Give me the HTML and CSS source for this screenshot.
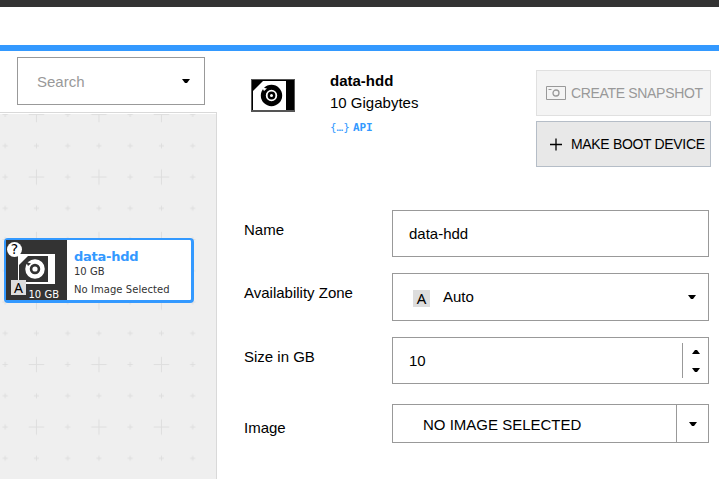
FILE: index.html
```html
<!DOCTYPE html>
<html lang="en">
<head>
<meta charset="utf-8">
<title>data-hdd</title>
<link rel="stylesheet" href="styles.css">
</head>
<body>
<svg class="defs" width="0" height="0" aria-hidden="true">
  <symbol id="down" viewBox="0 0 8 4"><path d="M0 0h8L5 4H3z"/></symbol>
  <symbol id="up" viewBox="0 0 8 4"><path d="M0 4h8L5 0H3z"/></symbol>
</svg>
<header class="topbar"></header>
<div class="layout">
  <aside class="sidebar">
    <div class="search"><span>Search</span><svg class="caret"><use href="#down"/></svg></div>
    <div class="canvas">
      <svg class="grid" width="215" height="365">
        <defs>
          <pattern id="marks" x="5.2" y="-30.7" width="62.5" height="62.5" patternUnits="userSpaceOnUse">
            <g fill="none" stroke="#dedede">
              <path d="M23.5 31.25h15.5M31.25 23.5v15.5"/>
              <path d="M28.6 0h5.2M31.25 0v2.6M31.25 59.9v2.6M0 28.6v5.2M0 31.25h2.6M59.9 31.25h2.6M0 0h2.6M0 0v2.6M59.9 0h2.6M0 59.9v2.6M62.5 28.6v5.2M28.6 62.5h5.2M62.5 59.9v2.6M59.9 62.5h2.6M62.5 0v2.6M0 62.5h2.6"/>
            </g>
          </pattern>
        </defs>
        <rect width="215" height="365" fill="url(#marks)"/>
      </svg>
      <div class="card">
        <div class="thumb">
          <svg width="60" height="60">
            <path fill="#fff" d="M12 14h37v30H12z"/>
            <path fill="#333" d="M22 16h20v26H13V25z"/>
            <circle cx="29" cy="29" r="7.500" fill="none" stroke="#fff" stroke-width="4.500"/>
            <circle cx="29" cy="29" r="2.600" fill="#fff"/>
            <path d="M20 22l5 1.500-3 2.500z" fill="#333"/>
          </svg>
          <span class="unknown">?</span>
          <span class="zone">A</span>
          <span class="size">10 GB</span>
        </div>
        <div class="info">
          <strong>data-hdd</strong>
          <span>10 GB</span>
          <span class="image">No Image Selected</span>
        </div>
      </div>
    </div>
  </aside>
  <main class="detail">
    <div class="summary">
      <svg class="disk" width="44" height="33">
        <path fill="#555" d="M0 0h44v33H0z"/>
        <path fill="#000" d="M1 1h42v30H1z"/>
        <path fill="#fff" d="M12 2h23v29H2V12z"/>
        <circle cx="20.500" cy="16.500" r="8.200" fill="none" stroke="#000" stroke-width="5"/>
        <circle cx="20.500" cy="16.500" r="2.700" fill="none" stroke="#000" stroke-width="2.400"/>
        <path fill="#fff" d="M11 8.500l5 1-3 2.500z"/>
      </svg>
      <div class="title">
        <strong>data-hdd</strong>
        <span>10 Gigabytes</span>
        <a class="api"><span>{…}</span><b>API</b></a>
      </div>
      <div class="actions">
        <div class="button disabled">
          <svg width="20" height="14" fill="none" stroke="#999"><path d="M.5.5h19v13H.5zM2.500 3.500h3"/><circle cx="10" cy="7" r="3" stroke-width="1.300"/></svg>
          <span>CREATE SNAPSHOT</span>
        </div>
        <div class="button">
          <svg width="20" height="14" fill="none" stroke="#000" stroke-width="1.300"><path d="M4 7.500h12M10 1.500v12"/></svg>
          <span>MAKE BOOT DEVICE</span>
        </div>
      </div>
    </div>
    <div class="form">
      <label>Name</label>
      <div class="field">data-hdd</div>
      <label>Availability Zone</label>
      <div class="field select"><span class="badge">A</span><span class="value">Auto</span><svg class="caret"><use href="#down"/></svg></div>
      <label>Size in GB</label>
      <div class="field number"><span>10</span><div class="spinner"><svg class="caret"><use href="#up"/></svg><svg class="caret"><use href="#down"/></svg></div></div>
      <label class="last">Image</label>
      <div class="field split"><span>NO IMAGE SELECTED</span><div class="toggle"><svg class="caret"><use href="#down"/></svg></div></div>
    </div>
  </main>
</div>
</body>
</html>
```
FILE: styles.css
```css
* { box-sizing: border-box; }
body {
  margin: 0;
  height: 479px;
  overflow: hidden;
  background: #fff;
  color: #000;
  font: 15px/17px "Liberation Sans", Arial, sans-serif;
}
.defs { position: absolute; }
svg { display: block; flex: none; }
.caret { width: 8px; height: 4px; }
.topbar {
  height: 51px;
  border-top: 7px solid #333;
  border-bottom: 6px solid #39f;
}
.layout { display: flex; height: 428px; }
.sidebar { width: 217px; flex: none; display: flex; flex-direction: column; }
.search {
  display: flex;
  align-items: center;
  justify-content: space-between;
  width: 188px;
  height: 48px;
  margin: 6px 0 7px 17px;
  padding: 0 14px 0 19px;
  border: 1px solid #999;
  color: #999;
}
.search .caret { fill: #000; }
.canvas {
  position: relative;
  flex: 1;
  padding: 125px 0 0 4px;
  border-top: 1px solid #d9d9d9;
  border-right: 1px solid #d9d9d9;
  background: #efefef;
  box-shadow: inset 0 1px #fff;
}
.grid { position: absolute; left: 0; top: 1px; }
.card {
  position: relative;
  display: flex;
  width: 190px;
  height: 65px;
  border: 3px solid #39f;
  border-top-width: 2px;
  border-left-width: 2px;
  border-radius: 4px;
  background: #fff;
  font-family: "DejaVu Sans", Verdana, sans-serif;
}
.thumb { position: relative; width: 61px; height: 60px; background: #333; flex: none; }
.unknown, .zone, .size { position: absolute; }
.unknown {
  left: 1px; top: 2px;
  width: 15px; height: 15px;
  border-radius: 50%;
  background: #fff;
  font: 14px/15px "DejaVu Sans", sans-serif;
  text-align: center;
}
.zone {
  left: 5px; top: 40px;
  width: 15px; height: 15px;
  background: #ddd;
  font: 14px/15px "Noto Sans", sans-serif;
  text-align: center;
}
.size { right: 8px; top: 49px; font-size: 10px; line-height: 12px; color: #fff; }
.info { display: flex; flex-direction: column; padding: 9px 0 0 7px; font-size: 10px; line-height: 14px; color: #333; white-space: nowrap; }
.info strong { font-size: 13px; line-height: 16px; letter-spacing: -.25px; color: #39f; }
.info .image { margin-top: 4px; letter-spacing: .06px; }
.detail { flex: 1; padding: 19px 8px 0 27px; }
.summary { display: flex; align-items: flex-start; height: 140px; }
.disk { margin: 9px 0 0 7px; }
.title { display: flex; flex-direction: column; margin: 2px 0 0 35px; }
.title > span { margin-top: 5px; }
.api { display: flex; gap: 3px; margin-top: 9px; color: #39f; font: 11px/15px "DejaVu Sans Mono", monospace; }
.actions { display: flex; flex-direction: column; gap: 5px; margin-left: auto; }
.button {
  display: flex;
  align-items: center;
  gap: 5px;
  width: 175px;
  height: 46px;
  padding-left: 9px;
  border: 1px solid #b5bdc7;
  background: #e8e8e8;
  font-size: 14px;
  letter-spacing: -.33px;
  white-space: nowrap;
}
.disabled { border-color: #e0e0e0; background: #f4f4f4; color: #999; }
.form {
  display: grid;
  grid-template-columns: 148px 317px;
  grid-template-rows: 47px 48px 47px 39px;
  row-gap: 16px;
}
.form label { padding-top: 11px; }
.form .last { padding-top: 19px; }
.field { display: flex; align-items: center; border: 1px solid #999; padding-left: 16px; }
.select { padding: 0 12px 0 20px; }
.select .caret { margin-left: auto; }
.value { margin-bottom: 1px; }
.badge { width: 17px; height: 17px; margin: 2px 13px 0 0; background: #ddd; font: 15px/17px "Noto Sans", sans-serif; text-align: center; }
.spinner {
  display: flex;
  flex-direction: column;
  align-items: center;
  justify-content: center;
  gap: 14px;
  width: 26px;
  height: 35px;
  margin-left: auto;
  border-left: 1px solid #999;
}
.split { height: 39px; margin-top: 4px; padding-left: 30px; }
.split > span { padding-top: 2px; }
.toggle { display: flex; align-items: center; justify-content: center; width: 32px; height: 37px; margin-left: auto; border-left: 1px solid #999; }
```
